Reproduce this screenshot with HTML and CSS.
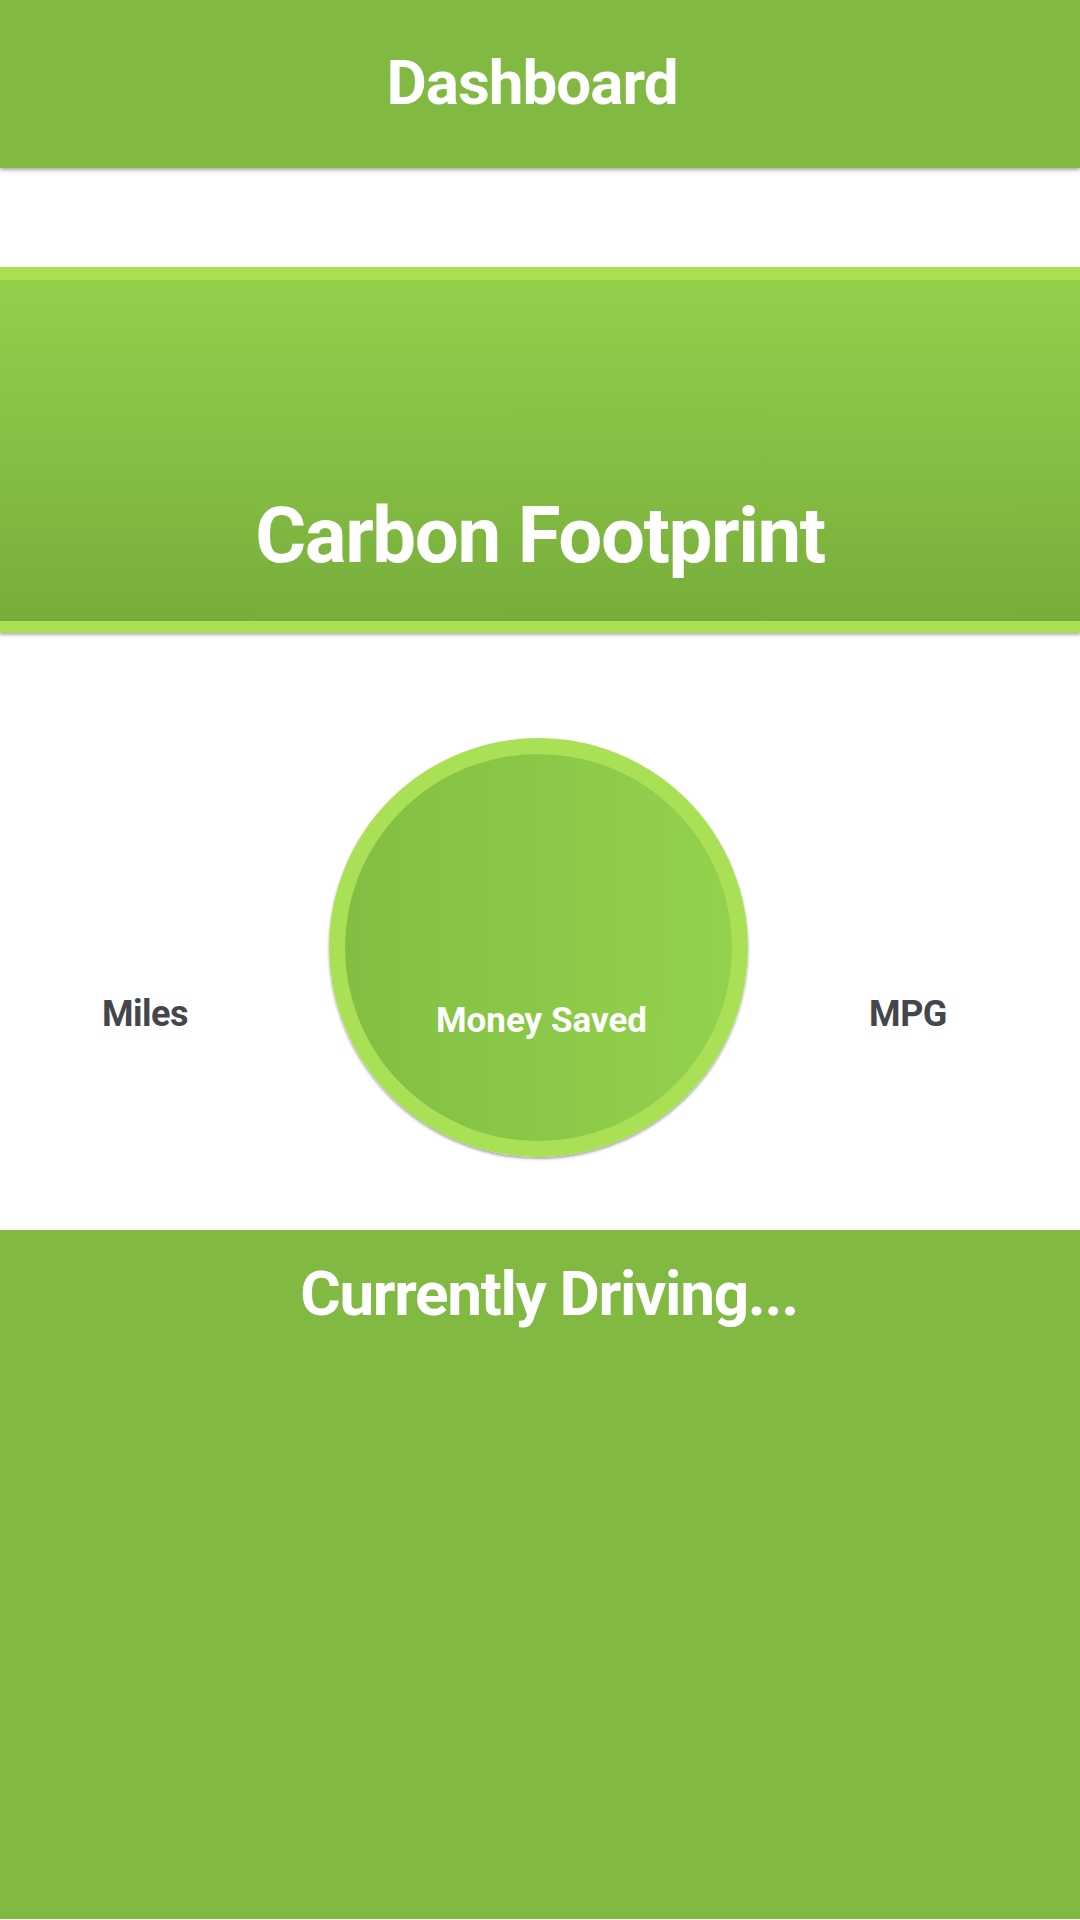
FILE: index.html
```html
<!DOCTYPE html>
<html>
<head>
<meta charset="utf-8">
<link rel="stylesheet" href="styles.css">
</head>
<body>
<header class="topbar"><h1 class="topbar-title">Dashboard</h1></header>
<div class="spacer"></div>
<section class="banner">
  <div class="banner-inner"><h2 class="banner-title">Carbon Footprint</h2></div>
</section>
<section class="stats">
  <div class="stat-side stat-left">Miles</div>
  <div class="circle"><div class="circle-label">Money Saved</div></div>
  <div class="stat-side stat-right">MPG</div>
</section>
<section class="driving"><h2 class="driving-title">Currently Driving...</h2></section>
</body>
</html>
```
FILE: styles.css
```css
html, body {
  margin: 0;
  padding: 0;
  width: 1080px;
  height: 1920px;
  overflow: hidden;
  background: #ffffff;
  font-family: Roboto, "Liberation Sans", sans-serif;
}
.topbar {
  position: relative;
  z-index: 2;
  height: 168px;
  box-sizing: border-box;
  padding-top: 52px;
  padding-right: 16px;
  background: #81b942;
  box-shadow: 0 2px 4px rgba(0,0,0,0.35);
}
.topbar-title {
  margin: 0;
  text-align: center;
  color: #ffffff;
  font-size: 62px;
  line-height: 1;
  font-weight: 700;
  letter-spacing: -1px;
}
.spacer { height: 99px; }
.banner {
  position: relative;
  z-index: 1;
  border-top: 13px solid #abe054;
  border-bottom: 12px solid #abe054;
  box-shadow: 0 2px 3px rgba(0,0,0,0.3);
}
.banner-inner {
  height: 341px;
  box-sizing: border-box;
  display: flex;
  align-items: flex-end;
  justify-content: center;
  padding-bottom: 46px;
  background: linear-gradient(to bottom, #93d14c, #78ad3c);
}
.banner-title {
  margin: 0;
  color: #ffffff;
  font-size: 78px;
  line-height: 1;
  font-weight: 700;
  letter-spacing: -1.4px;
}
.stats {
  height: 597px;
  box-sizing: border-box;
  padding-top: 105px;
  display: flex;
  align-items: flex-start;
}
.stat-side {
  margin-top: 258px;
  color: #43464b;
  font-size: 36px;
  line-height: 1;
  font-weight: 700;
  text-align: center;
  letter-spacing: -0.5px;
}
.stat-left { width: 290px; }
.stat-right { flex: 1; padding-right: 12px; }
.circle {
  margin-left: 39px;
  width: 387px;
  height: 387px;
  border: 16px solid #aae055;
  border-radius: 50%;
  background: linear-gradient(to right, #83be42, #93d24d);
  box-shadow: 0 2px 3px rgba(0,0,0,0.35);
  display: flex;
  justify-content: center;
  align-items: flex-start;
}
.circle-label {
  margin-top: 249px;
  margin-left: 6px;
  color: #ffffff;
  font-size: 35px;
  line-height: 1;
  font-weight: 700;
}
.driving {
  height: 689px;
  box-sizing: border-box;
  padding-top: 33px;
  padding-left: 18px;
  background: #81b942;
}
.driving-title {
  margin: 0;
  text-align: center;
  color: #ffffff;
  font-size: 62px;
  line-height: 1;
  font-weight: 700;
  letter-spacing: -1.3px;
}
```
